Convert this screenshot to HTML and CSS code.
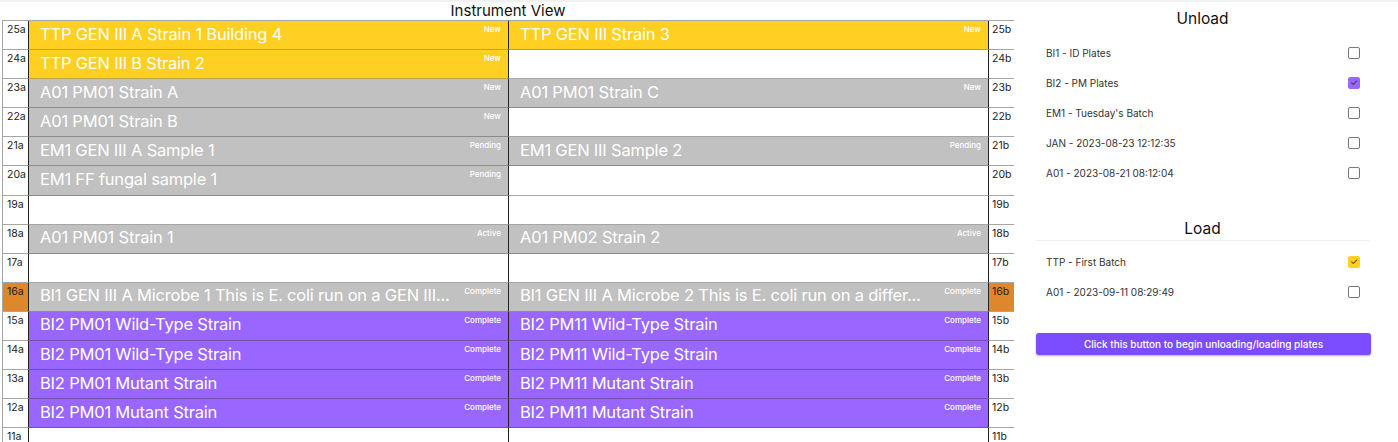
FILE: index.html
```html
<!DOCTYPE html>
<html lang="en">
<head>
  <meta charset="UTF-8" />
  <title>Instrument View</title>
  <link rel="stylesheet" href="styles.css">
</head>
<body>
<div class="topline"></div>
<div class="page">
  <div class="instrument">
    <h2>Instrument View</h2>
    <div class="grid" id="grid"></div>
  </div>

  <div class="side">
    <h3>Unload</h3>
    <div class="list">
      <div class="item"><span>BI1 - ID Plates</span><span class="box"></span></div>
      <div class="item"><span>BI2 - PM Plates</span><span class="box on-purple">&#10003;</span></div>
      <div class="item"><span>EM1 - Tuesday's Batch</span><span class="box"></span></div>
      <div class="item"><span>JAN - 2023-08-23 12:12:35</span><span class="box"></span></div>
      <div class="item"><span>A01 - 2023-08-21 08:12:04</span><span class="box"></span></div>
    </div>

    <h3 class="load-title">Load</h3>
    <div class="list load-list">
      <div class="item"><span>TTP - First Batch</span><span class="box on-yellow">&#10003;</span></div>
      <div class="item"><span>A01 - 2023-09-11 08:29:49</span><span class="box"></span></div>
    </div>

    <button type="button">Click this button to begin unloading/loading plates</button>
  </div>
</div>

<script>
  // [slot, colour, name, status] for side a and side b
  const rows = [
    [25, ['yellow', 'TTP GEN III A Strain 1 Building 4', 'New'], ['yellow', 'TTP GEN III Strain 3', 'New']],
    [24, ['yellow', 'TTP GEN III B Strain 2', 'New'], null],
    [23, ['gray', 'A01 PM01 Strain A', 'New'], ['gray', 'A01 PM01 Strain C', 'New']],
    [22, ['gray', 'A01 PM01 Strain B', 'New'], null],
    [21, ['gray', 'EM1 GEN III A Sample 1', 'Pending'], ['gray', 'EM1 GEN III Sample 2', 'Pending']],
    [20, ['gray', 'EM1 FF fungal sample 1', 'Pending'], null],
    [19, null, null],
    [18, ['gray', 'A01 PM01 Strain 1', 'Active'], ['gray', 'A01 PM02 Strain 2', 'Active']],
    [17, null, null],
    [16, ['gray', 'BI1 GEN III A Microbe 1 This is E. coli run on a GEN III...', 'Complete'], ['gray', 'BI1 GEN III A Microbe 2 This is E. coli run on a differ...', 'Complete'], true],
    [15, ['purple', 'BI2 PM01 Wild-Type Strain', 'Complete'], ['purple', 'BI2 PM11 Wild-Type Strain', 'Complete']],
    [14, ['purple', 'BI2 PM01 Wild-Type Strain', 'Complete'], ['purple', 'BI2 PM11 Wild-Type Strain', 'Complete']],
    [13, ['purple', 'BI2 PM01 Mutant Strain', 'Complete'], ['purple', 'BI2 PM11 Mutant Strain', 'Complete']],
    [12, ['purple', 'BI2 PM01 Mutant Strain', 'Complete'], ['purple', 'BI2 PM11 Mutant Strain', 'Complete']],
    [11, null, null]
  ];

  function cell(p) {
    if (!p) return '<div class="cell"></div>';
    return `<div class="cell ${p[0]}"><span class="name">${p[1]}</span><span class="status">${p[2]}</span></div>`;
  }

  let html = '';
  rows.forEach(r => {
    const hl = r[3] ? ' hl' : '';
    html += `<div class="slot left${hl}">${r[0]}a</div>` + cell(r[1]) + cell(r[2]) +
      `<div class="slot right${hl}">${r[0]}b</div>`;
  });
  document.getElementById('grid').innerHTML = html;
</script>
</body>
</html>
```

FILE: styles.css
```css
body {
  margin: 0;
  font-family: Inter, 'Noto Sans', sans-serif;
  color: #222;
  background: #fff;
  overflow: hidden;
}
.topline {
  height: 2px;
  background: #f1f1f1;
}
.page {
  display: flex;
  align-items: flex-start;
  padding-left: 2px;
}
.instrument {
  width: 1012px;
}
h2 {
  margin: 0;
  height: 18px;
  font-size: 15px;
  font-weight: 400;
  text-align: center;
  line-height: 18px;
  color: #111;
}
.grid {
  display: grid;
  grid-template-columns: 26px 479px 480px 26px;
  grid-auto-rows: 29.1px;
  border-top: 1.5px solid #a6a6a6;
  border-left: 1px solid #a6a6a6;
  border-right: 1px solid #a6a6a6;
}
.slot {
  font-size: 10.5px;
  padding: 2px 0 0 4px;
  color: #222;
  border-bottom: 1.5px solid #a6a6a6;
  background: #fff;
}
.slot.left {
  border-right: 1px solid #222;
}
.slot.right {
  border-left: 1px solid #222;
  padding-left: 3px;
}
.slot.hl {
  background: #e0862b;
}
.cell {
  position: relative;
  display: flex;
  align-items: center;
  padding-left: 11px;
  border-bottom: 1.5px solid #a6a6a6;
  background: #fff;
  overflow: hidden;
}
.cell + .cell {
  border-left: 1px solid #222;
}
.cell.yellow { background: #ffcf22; border-bottom-color: #b6a24a; }
.cell.gray { background: #c1c1c1; border-bottom-color: #8c8c8c; }
.cell.purple { background: #9966ff; border-bottom-color: #6f51b0; }
.name {
  font-size: 16.5px;
  color: #fff;
  white-space: nowrap;
  letter-spacing: -0.2px;
  margin-top: -3px;
}
.status {
  position: absolute;
  top: 3px;
  right: 7px;
  font-size: 8px;
  font-weight: 500;
  color: #fff;
}
.side {
  width: 335px;
  margin-left: 21px;
}
h3 {
  margin: 8px 0 0;
  font-size: 15.5px;
  font-weight: 400;
  text-align: center;
  color: #111;
  line-height: 18px;
}
.load-title {
  margin-top: 32px;
  padding-bottom: 2px;
  border-bottom: 1px solid #f2f2f2;
}
.list {
  margin-top: 10px;
}
.load-list {
  margin-top: 6px;
}
.item {
  display: flex;
  justify-content: space-between;
  align-items: center;
  height: 30px;
  padding: 0 10px 0 11px;
  font-size: 10px;
  color: #333;
}
.box {
  box-sizing: border-box;
  width: 12px;
  height: 12px;
  border: 1.5px solid #777;
  border-radius: 2px;
  font-size: 9px;
  line-height: 10px;
  text-align: center;
  color: #222;
}
.on-purple { background: #9966ff; border-color: #9966ff; }
.on-yellow { background: #ffcf22; border-color: #ffcf22; }
button {
  display: block;
  width: 335px;
  height: 22px;
  margin-top: 26px;
  margin-left: 1px;
  background: #7c4dff;
  border: none;
  border-radius: 3px;
  color: #fff;
  font-family: Inter, 'Noto Sans', sans-serif;
  font-size: 10px;
  font-weight: 500;
  box-shadow: 0 1px 2px rgb(0 0 0 / 0.3);
}
```
